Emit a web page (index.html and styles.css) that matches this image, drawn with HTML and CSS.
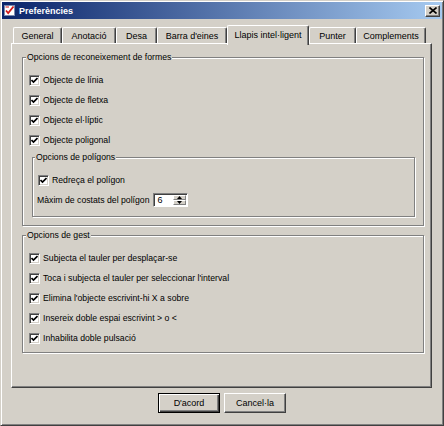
FILE: index.html
```html
<!DOCTYPE html>
<html>
<head>
<meta charset="utf-8">
<link rel="stylesheet" href="styles.css">
</head>
<body>
<div class="window">
  <div class="titlebar">
    <svg class="appicon" width="11" height="11" viewBox="0 0 11 11">
      <rect x="0.5" y="0.5" width="10" height="10" fill="#fff" stroke="#7a8ab0"/>
      <path d="M2 5.5 L4.2 8 L9.5 1.5" fill="none" stroke="#d01818" stroke-width="1.8"/>
      <path d="M1.5 2 L5 2" stroke="#d01818" stroke-width="1"/>
    </svg>
    <span class="title">Preferències</span>
    <div class="close">
      <svg width="8" height="7" viewBox="0 0 8 7"><path d="M0.5 0.5 L7.5 6.5 M7.5 0.5 L0.5 6.5" stroke="#000" stroke-width="1.6"/></svg>
    </div>
  </div>
  <div class="body">
    <div class="tabs">
      <div class="tab w-general">General</div>
      <div class="tab w-anot">Anotació</div>
      <div class="tab w-desa">Desa</div>
      <div class="tab w-barra">Barra d'eines</div>
      <div class="tab selected w-llapis">Llapis intel·ligent</div>
      <div class="tab w-punter">Punter</div>
      <div class="tab w-compl">Complements</div>
    </div>
    <div class="panel">
      <fieldset class="group g1">
        <legend>Opcions de reconeixement de formes</legend>
        <div class="row"><span class="cb"><svg width="7" height="7" viewBox="0 0 7 7"><path d="M0.5 3 L2.5 5 L6.5 1" fill="none" stroke="#000" stroke-width="1.7"/></svg></span>Objecte de línia</div>
        <div class="row"><span class="cb"><svg width="7" height="7" viewBox="0 0 7 7"><path d="M0.5 3 L2.5 5 L6.5 1" fill="none" stroke="#000" stroke-width="1.7"/></svg></span>Objecte de fletxa</div>
        <div class="row"><span class="cb"><svg width="7" height="7" viewBox="0 0 7 7"><path d="M0.5 3 L2.5 5 L6.5 1" fill="none" stroke="#000" stroke-width="1.7"/></svg></span>Objecte el·líptic</div>
        <div class="row"><span class="cb"><svg width="7" height="7" viewBox="0 0 7 7"><path d="M0.5 3 L2.5 5 L6.5 1" fill="none" stroke="#000" stroke-width="1.7"/></svg></span>Objecte poligonal</div>
        <fieldset class="group inner">
          <legend>Opcions de polígons</legend>
          <div class="row"><span class="cb"><svg width="7" height="7" viewBox="0 0 7 7"><path d="M0.5 3 L2.5 5 L6.5 1" fill="none" stroke="#000" stroke-width="1.7"/></svg></span>Redreça el polígon</div>
          <div class="row spinrow">Màxim de costats del polígon
            <div class="spin">
              <span class="spinval">6</span>
              <div class="spinbtns">
                <div class="sbtn"><svg width="5" height="3" viewBox="0 0 5 3"><path d="M0 3 L2.5 0 L5 3 Z" fill="#000"/></svg></div>
                <div class="sbtn"><svg width="5" height="3" viewBox="0 0 5 3"><path d="M0 0 L2.5 3 L5 0 Z" fill="#000"/></svg></div>
              </div>
            </div>
          </div>
        </fieldset>
      </fieldset>
      <fieldset class="group g2">
        <legend>Opcions de gest</legend>
        <div class="row"><span class="cb"><svg width="7" height="7" viewBox="0 0 7 7"><path d="M0.5 3 L2.5 5 L6.5 1" fill="none" stroke="#000" stroke-width="1.7"/></svg></span>Subjecta el tauler per desplaçar-se</div>
        <div class="row"><span class="cb"><svg width="7" height="7" viewBox="0 0 7 7"><path d="M0.5 3 L2.5 5 L6.5 1" fill="none" stroke="#000" stroke-width="1.7"/></svg></span>Toca i subjecta el tauler per seleccionar l'interval</div>
        <div class="row"><span class="cb"><svg width="7" height="7" viewBox="0 0 7 7"><path d="M0.5 3 L2.5 5 L6.5 1" fill="none" stroke="#000" stroke-width="1.7"/></svg></span>Elimina l'objecte escrivint-hi X a sobre</div>
        <div class="row"><span class="cb"><svg width="7" height="7" viewBox="0 0 7 7"><path d="M0.5 3 L2.5 5 L6.5 1" fill="none" stroke="#000" stroke-width="1.7"/></svg></span>Insereix doble espai escrivint &gt; o &lt;</div>
        <div class="row"><span class="cb"><svg width="7" height="7" viewBox="0 0 7 7"><path d="M0.5 3 L2.5 5 L6.5 1" fill="none" stroke="#000" stroke-width="1.7"/></svg></span>Inhabilita doble pulsació</div>
      </fieldset>
    </div>
    <div class="buttons">
      <div class="btn default">D'acord</div>
      <div class="btn">Cancel·la</div>
    </div>
  </div>
</div>
</body>
</html>
```
FILE: styles.css
```css
html, body {
  margin: 0;
  padding: 0;
  background: #d4d0c8;
}
body {
  font-family: "Liberation Sans", Arial, sans-serif;
  font-size: 8.7px;
  color: #000;
}
.window {
  width: 444px;
  height: 426px;
  box-sizing: border-box;
  border: 1px solid;
  border-color: #d4d0c8 #404040 #404040 #d4d0c8;
  box-shadow: inset 1px 1px 0 #fff, inset -1px -1px 0 #808080;
  padding: 1px;
  background: #d4d0c8;
}
.titlebar {
  height: 17px;
  display: flex;
  align-items: center;
  padding-left: 2px;
  background: linear-gradient(to right, #0a246a, #a6caf0);
}
.appicon {
  display: block;
  flex: none;
}
.title {
  margin-left: 4px;
  color: #fff;
  font-weight: bold;
  font-size: 9px;
}
.close {
  margin-left: auto;
  margin-right: 2px;
  width: 15px;
  height: 12px;
  box-sizing: border-box;
  background: #d4d0c8;
  border: 1px solid;
  border-color: #fff #404040 #404040 #fff;
  box-shadow: inset -1px -1px 0 #808080;
  display: flex;
  align-items: center;
  justify-content: center;
}
.close svg { display: block; }
.body {
  padding: 0 10px 0 9px;
}
.tabs {
  margin-top: 6px;
  height: 18px;
  display: flex;
  align-items: flex-end;
  padding-left: 2px;
  position: relative;
  z-index: 1;
}
.tab {
  height: 16px;
  box-sizing: border-box;
  border-top: 1px solid #fff;
  border-left: 1px solid #fff;
  border-right: 1px solid #404040;
  box-shadow: inset -1px 0 0 #808080;
  border-radius: 2px 2px 0 0;
  display: flex;
  align-items: center;
  justify-content: center;
  background: #d4d0c8;
  white-space: nowrap;
  flex: none;
  font-size: 9px;
}
.tab.selected {
  height: 20px;
  margin-bottom: -2px;
  padding-bottom: 2px;
}
.w-general { width: 49px; }
.w-anot { width: 54px; }
.w-desa { width: 41px; }
.w-barra { width: 70px; }
.w-llapis { width: 82px; }
.w-punter { width: 47px; }
.w-compl { width: 70px; }
.panel {
  height: 345px;
  box-sizing: border-box;
  border: 1px solid;
  border-color: #fff #404040 #404040 #fff;
  box-shadow: inset -1px -1px 0 #808080;
  padding: 7px 7px 0 10px;
}
.group {
  margin: 0;
  min-inline-size: 0;
  border: 1px solid #808080;
  box-shadow: inset 1px 1px 0 #fff, 1px 1px 0 #fff;
  padding: 7px 0 8px 0;
}
.group legend {
  font-size: 8.7px;
  line-height: 12px;
  padding: 0 1px;
  margin-left: 3px;
  background: #d4d0c8;
}
.row {
  height: 20px;
  display: flex;
  align-items: center;
  padding-left: 6px;
  white-space: nowrap;
}
.cb {
  width: 11px;
  height: 11px;
  box-sizing: border-box;
  background: #fff;
  border: 1px solid;
  border-color: #808080 #fff #fff #808080;
  box-shadow: inset 1px 1px 0 #404040, inset -1px -1px 0 #d4d0c8;
  display: flex;
  align-items: center;
  justify-content: center;
  margin-right: 3px;
  flex: none;
}
.cb svg { display: block; }
.inner {
  margin: 1px 8px 0 9px;
  padding: 7px 0 6px 0;
}
.inner legend {
  margin-left: 2px;
}
.inner .row {
  padding-left: 5px;
}
.inner .spinrow {
  padding-left: 4px;
}
.spin {
  margin-left: 3px;
  width: 35px;
  height: 14px;
  box-sizing: border-box;
  border: 1px solid;
  border-color: #808080 #fff #fff #808080;
  box-shadow: inset 1px 1px 0 #404040;
  background: #fff;
  display: flex;
  padding: 1px;
}
.spinval {
  flex: 1;
  padding-left: 3px;
  line-height: 10px;
  font-size: 9px;
}
.spinbtns {
  width: 13px;
  display: flex;
  flex-direction: column;
}
.sbtn {
  flex: 1;
  box-sizing: border-box;
  background: #d4d0c8;
  border: 1px solid;
  border-color: #fff #808080 #808080 #fff;
  display: flex;
  align-items: center;
  justify-content: center;
}
.sbtn svg { display: block; }
.g2 {
  margin-top: 3px;
  padding-bottom: 4px;
}
.buttons {
  margin-top: 5px;
  display: flex;
  justify-content: center;
  gap: 4px;
  padding-left: 1px;
}
.btn {
  width: 62px;
  height: 20px;
  box-sizing: border-box;
  border: 1px solid;
  border-color: #fff #404040 #404040 #fff;
  box-shadow: inset -1px -1px 0 #808080;
  display: flex;
  align-items: center;
  justify-content: center;
  font-size: 9px;
}
.btn.default {
  border-color: #000;
  box-shadow: inset 1px 1px 0 #fff, inset -1px -1px 0 #404040, inset -2px -2px 0 #808080;
}
```
